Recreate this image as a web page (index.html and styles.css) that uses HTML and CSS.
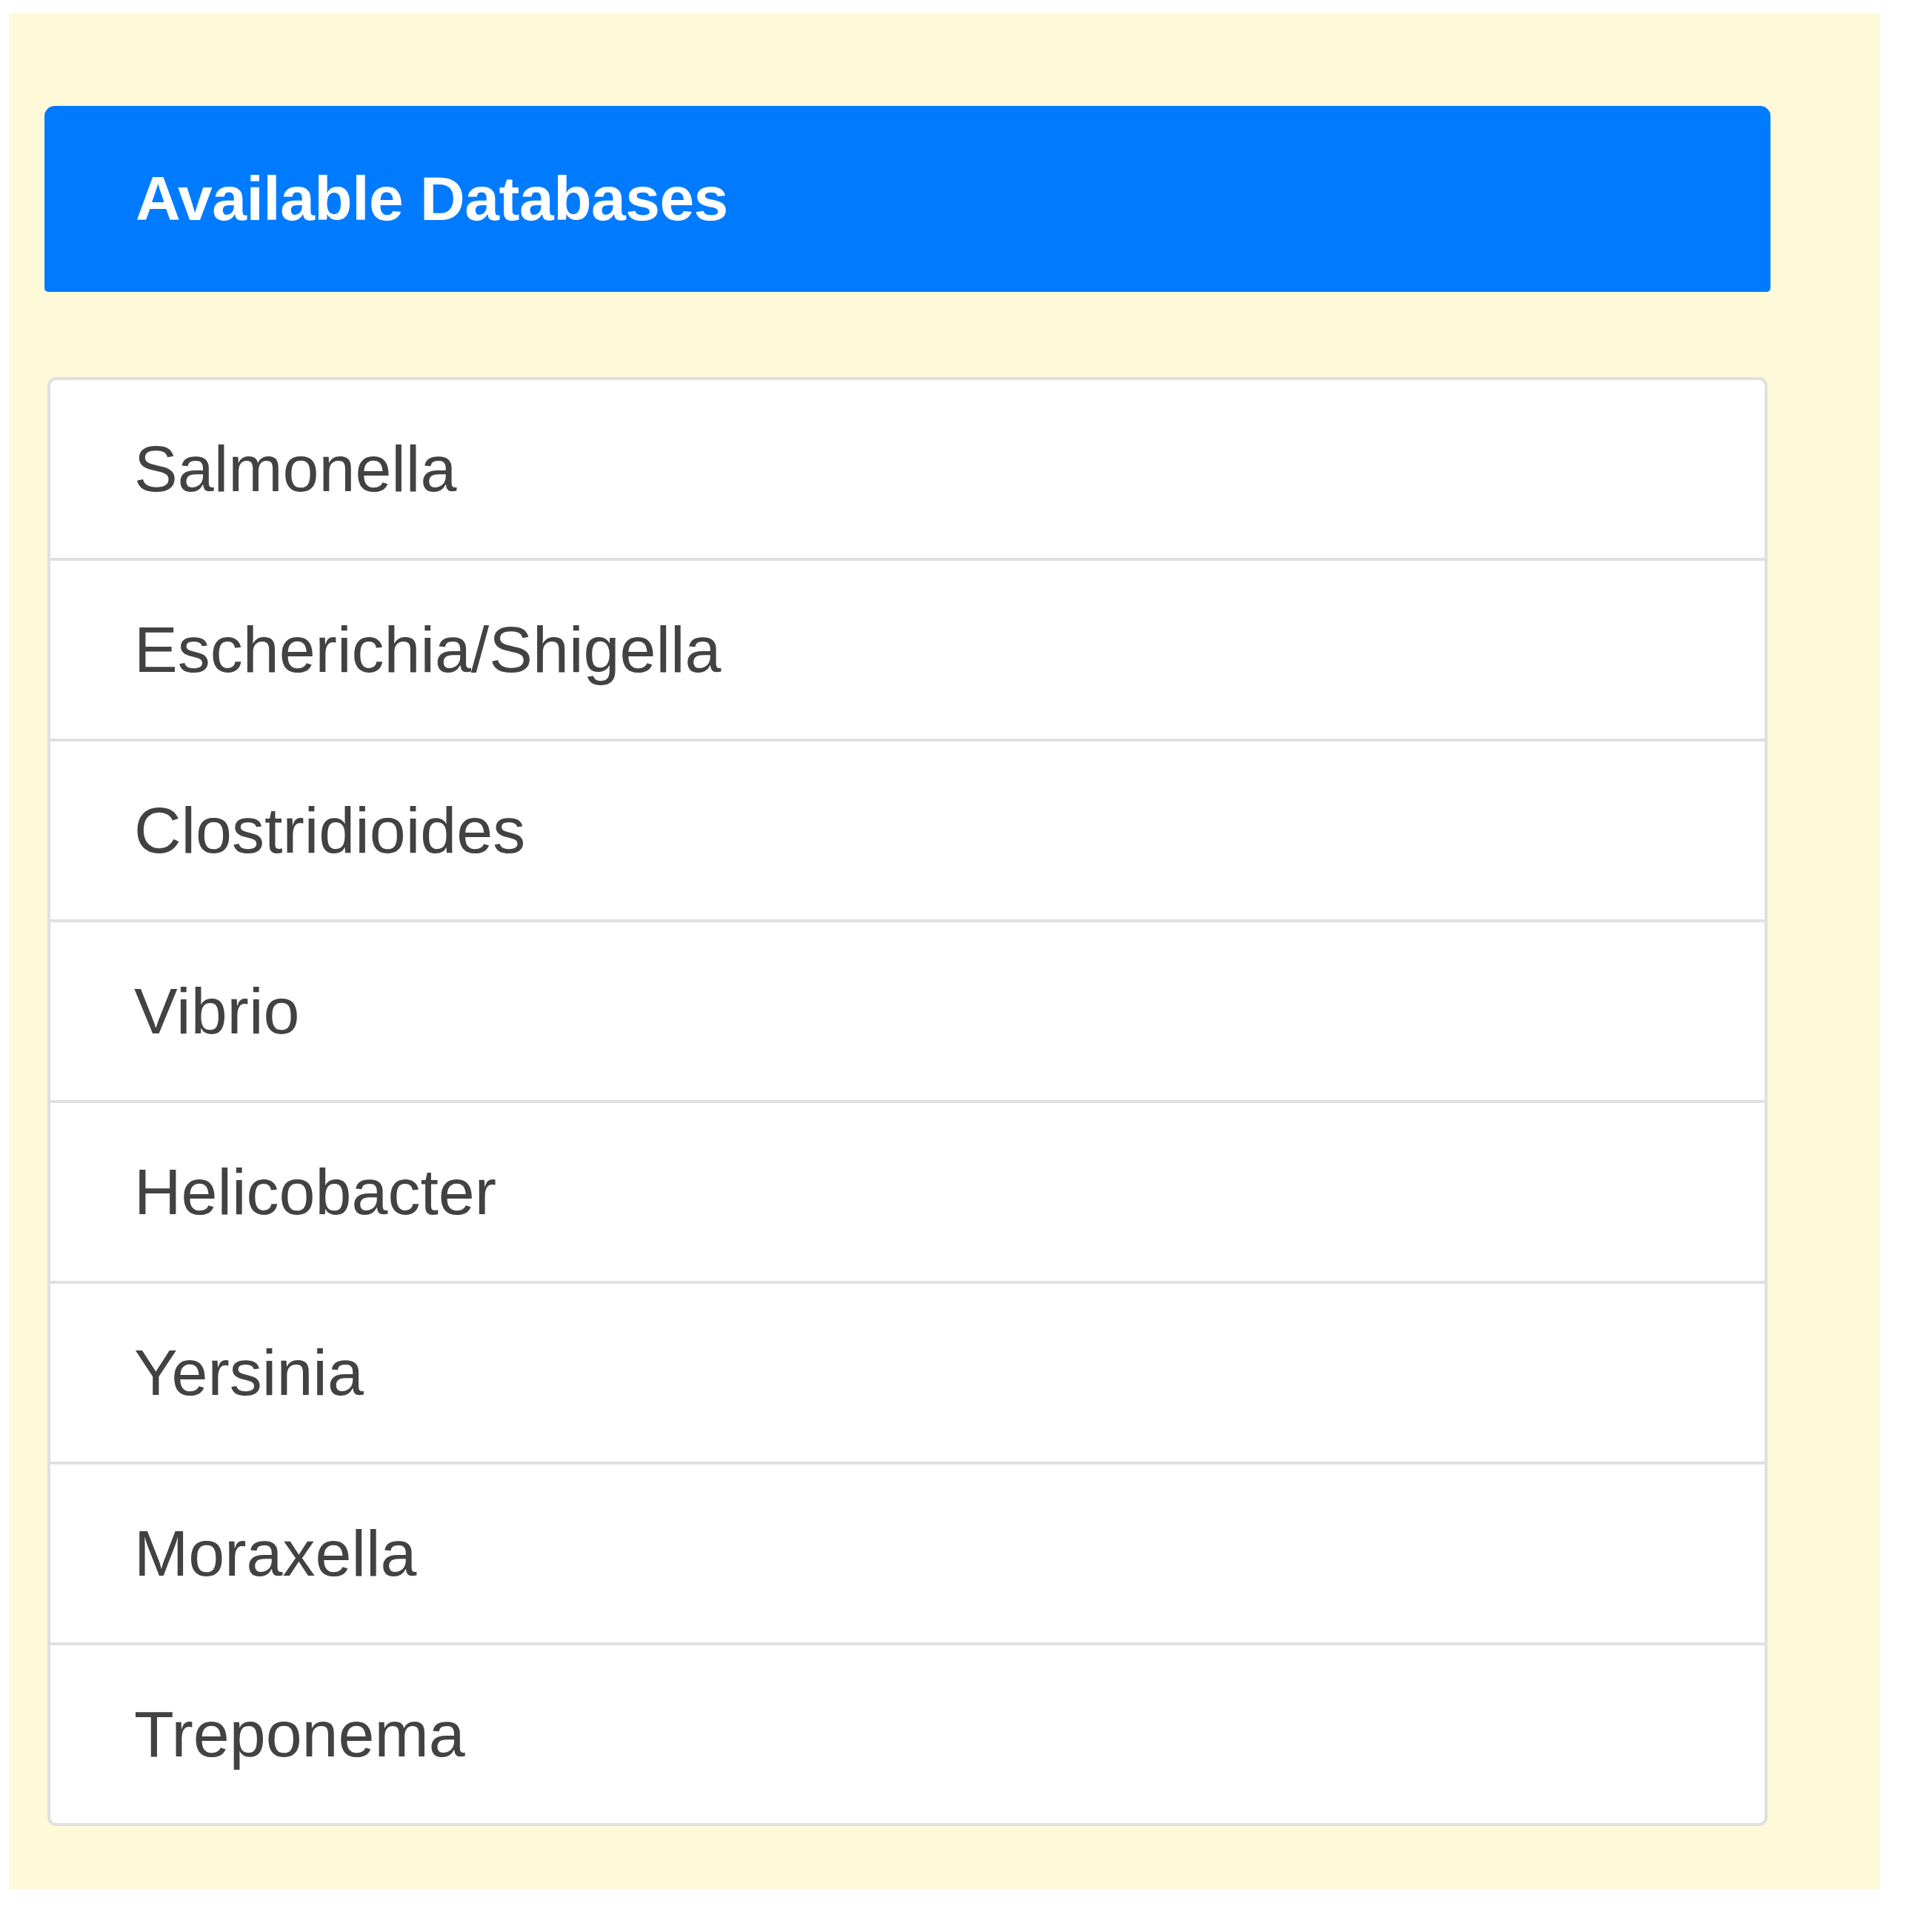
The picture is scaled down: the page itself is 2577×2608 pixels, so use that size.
FILE: index.html
```html
<!DOCTYPE html>
<html>
<head>
<meta charset="utf-8">
<title>Available Databases</title>
<link rel="stylesheet" href="styles.css">
</head>
<body>
<div class="panel">
  <div class="panel-header">Available Databases</div>
  <ul class="db-list">
    <li class="db-item">Salmonella</li>
    <li class="db-item">Escherichia/Shigella</li>
    <li class="db-item">Clostridioides</li>
    <li class="db-item">Vibrio</li>
    <li class="db-item">Helicobacter</li>
    <li class="db-item">Yersinia</li>
    <li class="db-item">Moraxella</li>
    <li class="db-item">Treponema</li>
  </ul>
</div>
</body>
</html>
```

FILE: styles.css
```css
html, body {
  margin: 0;
  padding: 0;
  background: #ffffff;
}

body {
  font-family: "Liberation Sans", Arial, sans-serif;
}

.panel {
  margin: 18px 0 0 12px;
  width: 2526px;
  height: 2532px;
  box-sizing: border-box;
  background: #fef9d8;
  padding: 125px 148px 85px 48px;
  display: flex;
  flex-direction: column;
}

.panel-header {
  height: 252px;
  box-sizing: border-box;
  background: #007bff;
  color: #ffffff;
  font-weight: bold;
  font-size: 84px;
  display: flex;
  align-items: center;
  padding-left: 123px;
  border-radius: 14px 14px 5px 5px;
  letter-spacing: -0.5px;
}

.db-list {
  list-style: none;
  margin: 115px 4px 0 4px;
  padding: 0;
  background: #ffffff;
  border: 4px solid #e0e0e0;
  border-radius: 12px;
}

.db-item {
  height: 240px;
  display: flex;
  align-items: center;
  padding-left: 113px;
  font-size: 88px;
  color: #424242;
  border-bottom: 4px solid #e0e0e0;
}

.db-item:last-child {
  border-bottom: none;
}
```
